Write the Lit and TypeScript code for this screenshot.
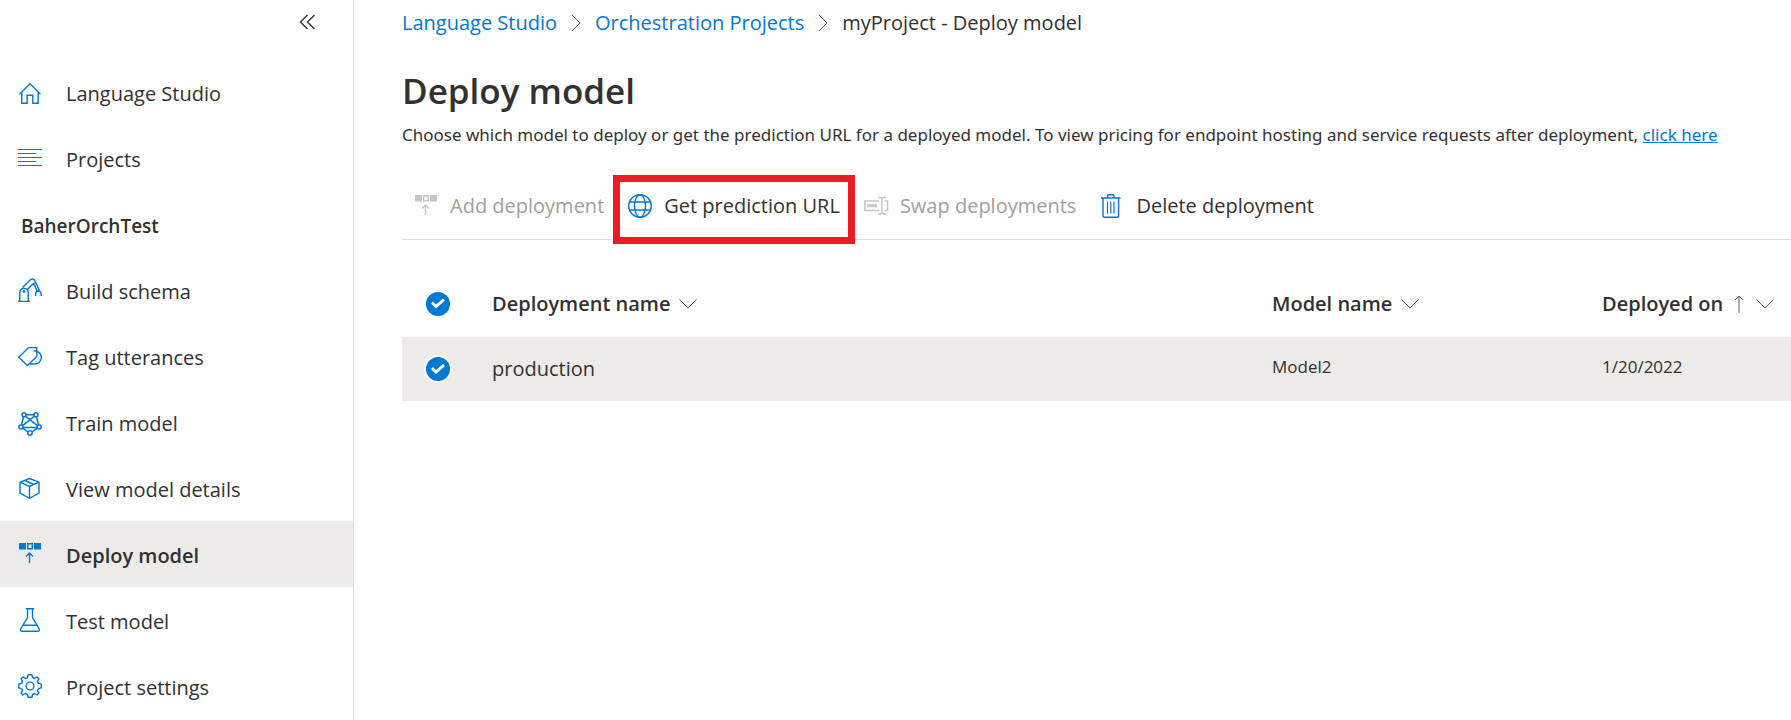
import { LitElement, html, css, svg, TemplateResult } from "lit";
import { customElement, property, state } from "lit/decorators.js";
import { classMap } from "lit/directives/class-map.js";

const deployShape = svg`
  <path fill="currentColor" stroke="none" d="M1 1h7v6.500H1zM16 1h7v6.500h-7z"/>
  <path stroke-width="1.500" d="M9.750 1.750h4.500v5h-4.500z"/>
  <path stroke-width="1.400" d="M11.500 21V11.500M8 14.500l3.500-3.500 3.500 3.500"/>`;

const shapes: Record<string, TemplateResult> = {
  home: svg`<path d="M1.500 14.200 12 3.800l10.500 10.400M3.800 12v11.300h5.400v-8.100h5.600v8.100h5.400V12"/>`,
  lines: svg`<path stroke-width="1" d="M0 3.500h24M0 7.500h18M0 11.500h24M0 15.500h18M0 19.500h24"/>`,
  robot: svg`<path d="M0 23.400h12M1.800 23V13.500a4.400 4.400 0 0 1 8.400 0V23M4.500 9.600l8-7.800q2.300-2 4.200.6l4.600 10M9.600 11.200l6.200-5.900 3.200 7.500M17.600 18v-2.300q.3-2.300 2.700-3 2.400.7 3 3V18M18 13.300h4"/><circle cx="6" cy="13.600" r="1" fill="currentColor" stroke-width="1"/>`,
  tag: svg`<path d="M10.500 3.600h8.300v8.900l-9.500 9L.9 13.200zM15.500 7h2.200a7 7 0 0 1 5.600 6.400 6.600 6.600 0 0 1-7 6.600h-4.500"/>`,
  train: svg`<g stroke-width="1.500"><circle cx="6" cy="4.700" r="2"/><circle cx="18" cy="4.700" r="2"/><circle cx="2.900" cy="17" r="2"/><circle cx="21.100" cy="17" r="2"/><circle cx="12" cy="23" r="2.200"/><path d="M8 4.700h8M5.500 6.700 3.500 15M18.500 6.700l2 8.300M7.500 6.200 19.400 15.700M16.500 6.200 4.600 15.700M5 17.500h14M4.700 18.100l5.200 3.900M19.300 18.100 14.100 22"/></g>`,
  cube: svg`<path d="M11.500 2.500 21 6.200v11L11.500 22.300 2 17.200v-11zM2 6.200l9.500 4.200L21 6.200M11.500 10.400v11.900M6.700 4.500l9.500 4"/>`,
  deploy: deployShape,
  flask: svg`<path d="M7.800.7h8.400M9.500.7v8.800L2.700 21q-.5 2.300 1.300 2.300h16q1.800 0 1.300-2.300L14.500 9.500V.7M5 17.300h14"/>`,
  gear: svg`<circle cx="12" cy="12" r="3.900"/><path d="M13.900.8 14.600 3.600 16.600 4.500 19.100 3 21 4.900 19.500 7.400 20.400 9.400 23.300 10.100V13.900L20.400 14.600 19.500 16.600 21 19.100 19.100 21 16.600 19.500 14.600 20.400 13.900 23.300H10.100L9.400 20.400 7.400 19.500 4.900 21 3 19.100 4.500 16.600 3.600 14.600.8 13.900V10.100L3.600 9.400 4.500 7.400 3 4.900 4.900 3 7.400 4.500 9.400 3.600 10.100.8z" stroke-linejoin="round"/>`,
  globe: svg`<circle cx="12" cy="12" r="11.300"/><ellipse cx="12" cy="12" rx="5.500" ry="11.300"/><path d="M1.700 8h20.600M1.700 16h20.600"/>`,
  swap: svg`<path stroke-width="1.500" d="M15 7H.8v9.500H15M20.500 7h3v9.500h-3M14 3.300q3.500 0 4 1.500.5-1.500 4-1.500M14 20.300q3.500 0 4-1.500.5 1.500 4 1.500M18 4.500V19"/><path stroke-width="3" d="M3 11.700h10"/>`,
  trash: svg`<path d="M1 4h19.500M7.500 4V2.200q0-1.500 1.500-1.500h3.500q1.500 0 1.500 1.500V4M3 4v17.500q0 1.800 1.800 1.800h12q1.800 0 1.800-1.800V4"/><path stroke-width="1.200" d="M7.500 7.500v12M10.800 7.500v12M14 7.500v12"/>`,
  chevronDown: svg`<path stroke-width="1" d="M3.500 7.500 12 16l8.500-8.500"/>`,
  chevronRight: svg`<path stroke-width="1" d="m8 4 8 8-8 8"/>`,
  arrowUp: svg`<path stroke-width="1" d="M10 21V4M6 8l4-4 4 4"/>`,
  collapse: svg`<path d="m11.500 5-7 7 7 7M18.500 5l-7 7 7 7"/>`,
};

@customElement("ls-icon")
class LsIcon extends LitElement {
  @property() name = "";
  static styles = css`
    :host { display: block; flex: none; width: 24px; height: 24px; }
    svg { display: block; overflow: visible; fill: none; stroke: currentColor; stroke-width: 1.4; }
  `;
  render() {
    return html`<svg width="24" height="24" viewBox="0 0 24 24" aria-hidden="true">${shapes[this.name]}</svg>`;
  }
}

const topLinks = [
  { icon: "home", label: "Language Studio" },
  { icon: "lines", label: "Projects" },
];
const projectLinks = [
  { icon: "robot", label: "Build schema" },
  { icon: "tag", label: "Tag utterances" },
  { icon: "train", label: "Train model" },
  { icon: "cube", label: "View model details" },
  { icon: "deploy", label: "Deploy model" },
  { icon: "flask", label: "Test model" },
  { icon: "gear", label: "Project settings" },
];

@customElement("ls-sidebar")
class LsSidebar extends LitElement {
  @state() active = "Deploy model";
  static styles = css`
    :host { display: block; border-right: 1px solid #e1dfdd; }
    .top { display: flex; justify-content: flex-end; height: 59px; padding: 10px 33px 0 0; box-sizing: border-box; }
    .collapse { display: block; height: 24px; padding: 0; border: 0; background: none; color: #323130; cursor: pointer; }
    .link, .project { display: flex; align-items: center; height: 66px; box-sizing: border-box; color: #323130; }
    .link { gap: 24px; padding: 0 18px; text-decoration: none; }
    .link:hover { background: #f3f2f1; }
    .link ls-icon { color: #0078d4; }
    .label { padding-top: 4px; }
    .project { margin: 0; padding: 4px 21px 0; font-size: 19px; font-weight: 600; }
    .active, .active:hover { background: #edebe9; font-weight: 600; }
  `;
  private link(l: { icon: string; label: string }) {
    const on = l.label === this.active;
    return html`<a href="#" class=${classMap({ link: true, active: on })}
      aria-current=${on ? "page" : "false"}
      @click=${(e: Event) => { e.preventDefault(); this.active = l.label; }}
      ><ls-icon name=${l.icon}></ls-icon><span class="label">${l.label}</span></a>`;
  }
  render() {
    return html`
      <div class="top"><button class="collapse" aria-label="Collapse navigation"><ls-icon name="collapse"></ls-icon></button></div>
      <nav aria-label="Project">
        ${topLinks.map((l) => this.link(l))}
        <h2 class="project">BaherOrchTest</h2>
        ${projectLinks.map((l) => this.link(l))}
      </nav>`;
  }
}

@customElement("app-root")
class AppRoot extends LitElement {
  @state() selected = true;
  static styles = css`
    :host {
      display: grid; grid-template-columns: 354px minmax(0, 1fr); min-height: 100vh;
      font: 20px/28px "Open Sans", "Noto Sans", sans-serif; color: #323130; background: #fff;
    }
    main { padding-left: 48px; }
    a { color: #0078d4; }
    .crumbs { display: flex; align-items: center; gap: 7px; padding-top: 9px; }
    .crumbs a { text-decoration: none; }
    .crumbs ls-icon { color: #605e5c; }
    h1 { margin: 30px 0 0; font-size: 35px; line-height: 48px; font-weight: 600; }
    .intro { margin: 8px 0 0; font-family: "Noto Sans", "Open Sans", sans-serif; font-size: 17px; line-height: 24px; }
    .toolbar { display: flex; padding: 35px 0 9px; border-bottom: 1px solid #e1dfdd; }
    .tool {
      position: relative; display: flex; align-items: center; gap: 12px; height: 48px; padding: 0 12px;
      border: 0; background: none; font: inherit; color: #323130; white-space: nowrap; cursor: pointer;
    }
    .tool ls-icon { color: #0078d4; }
    .tool:disabled { color: #a19f9d; cursor: default; }
    .tool:disabled ls-icon { color: #c8c6c4; }
    .highlight { position: absolute; inset: -7px -3px -14px; border: 7px solid #ed1c24; pointer-events: none; }
    table { width: 100%; margin-top: 32px; border-collapse: collapse; table-layout: fixed; }
    th, td { box-sizing: border-box; padding: 0 12px; text-align: left; vertical-align: middle; }
    th { height: 65px; padding-bottom: 2px; font-weight: 600; }
    td { height: 64px; background: #edebe9; }
    .check { width: 78px; }
    .model { width: 330px; }
    .date { width: 201px; }
    .small { font-size: 17px; padding-bottom: 4px; }
    .sort { display: flex; align-items: center; gap: 6px; padding: 0; border: 0; background: none; font: inherit; color: inherit; white-space: nowrap; cursor: pointer; }
    .sort ls-icon { color: #605e5c; }
    .glyphs { display: flex; }
    input {
      appearance: none; display: block; width: 24px; height: 24px; margin: 0 12px;
      border: 1px solid #8a8886; border-radius: 50%; background: #fff; cursor: pointer;
    }
    input:checked { border: 0; background: #0078d4; }
    td input:checked { box-shadow: 0 0 0 2px #fff; }
    input:checked::after {
      content: ""; display: block; width: 24px; height: 24px; background: #fff;
      clip-path: polygon(5px 12px, 7px 10px, 10px 13px, 17px 7px, 19px 9px, 10px 17px);
    }
  `;
  private toggle = (e: Event) => { this.selected = (e.target as HTMLInputElement).checked; };
  render() {
    const off = !this.selected;
    return html`
      <ls-sidebar></ls-sidebar>
      <main>
        <nav class="crumbs" aria-label="Breadcrumb">
          <a href="#">Language Studio</a><ls-icon name="chevronRight"></ls-icon>
          <a href="#">Orchestration Projects</a><ls-icon name="chevronRight"></ls-icon>
          <span aria-current="page">myProject - Deploy model</span>
        </nav>
        <h1>Deploy model</h1>
        <p class="intro">Choose which model to deploy or get the prediction URL for a deployed model. To view pricing for endpoint hosting and service requests after deployment, <a href="#">click here</a></p>
        <div class="toolbar" role="toolbar" aria-label="Deployment actions">
          <button class="tool" ?disabled=${this.selected}><ls-icon name="deploy"></ls-icon>Add deployment</button>
          <button class="tool" ?disabled=${off}><ls-icon name="globe"></ls-icon>Get prediction URL<span class="highlight"></span></button>
          <button class="tool" disabled><ls-icon name="swap"></ls-icon>Swap deployments</button>
          <button class="tool" ?disabled=${off}><ls-icon name="trash"></ls-icon>Delete deployment</button>
        </div>
        <table>
          <thead>
            <tr>
              <th class="check"><input type="checkbox" aria-label="Select all deployments" .checked=${this.selected} @change=${this.toggle}></th>
              <th><button class="sort">Deployment name<ls-icon name="chevronDown"></ls-icon></button></th>
              <th class="model"><button class="sort">Model name<ls-icon name="chevronDown"></ls-icon></button></th>
              <th class="date" aria-sort="ascending"><button class="sort">Deployed on<span class="glyphs"><ls-icon name="arrowUp"></ls-icon><ls-icon name="chevronDown"></ls-icon></span></button></th>
            </tr>
          </thead>
          <tbody>
            <tr>
              <td><input type="checkbox" aria-label="Select production" .checked=${this.selected} @change=${this.toggle}></td>
              <td>production</td>
              <td class="small">Model2</td>
              <td class="small">1/20/2022</td>
            </tr>
          </tbody>
        </table>
      </main>`;
  }
}
